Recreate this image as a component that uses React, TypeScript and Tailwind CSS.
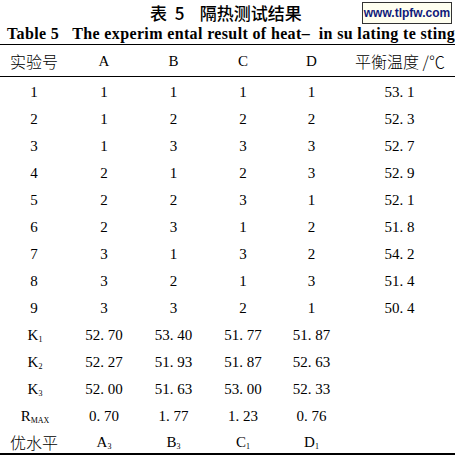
import React from 'react';

type Row = string[];

const serif = "font-['Liberation_Serif','Noto_Sans_CJK_SC',serif]";
const cjk = "font-['Noto_Sans_CJK_SC',sans-serif]";

const rows: Row[] = [
  ['1', '1', '1', '1', '1', '53. 1'],
  ['2', '1', '2', '2', '2', '52. 3'],
  ['3', '1', '3', '3', '3', '52. 7'],
  ['4', '2', '1', '2', '3', '52. 9'],
  ['5', '2', '2', '3', '1', '52. 1'],
  ['6', '2', '3', '1', '2', '51. 8'],
  ['7', '3', '1', '3', '2', '54. 2'],
  ['8', '3', '2', '1', '3', '51. 4'],
  ['9', '3', '3', '2', '1', '50. 4'],
];

const kRows: { sub: string; vals: string[] }[] = [
  { sub: '1', vals: ['52. 70', '53. 40', '51. 77', '51. 87'] },
  { sub: '2', vals: ['52. 27', '51. 93', '51. 87', '52. 63'] },
  { sub: '3', vals: ['52. 00', '51. 63', '53. 00', '52. 33'] },
];

const cols = 'grid grid-cols-[68px_72px_67px_72px_65px_111px] items-center';

const Sub: React.FC<{ base: string; sub: string }> = ({ base, sub }) => (
  <span>
    {base}
    <sub className="text-[8px] relative top-[2px]">{sub}</sub>
  </span>
);

const App: React.FC = () => {
  return (
    <div className={`w-[455px] h-[458px] bg-white text-black overflow-hidden ${serif}`}>
      {/* title */}
      <div className="relative h-[24px]">
        <div className={`pl-[150px] text-[17px] font-medium leading-[26px] whitespace-nowrap ${cjk}`}>
          表&nbsp;&nbsp;5&nbsp;&nbsp;&nbsp;&nbsp;隔热测试结果
        </div>
        <div className="absolute right-[3px] top-[2px] w-[90px] h-[22px] border border-[#333] bg-[#fffff0] flex items-center justify-center text-[12px] font-bold text-[#101a7a] font-['Liberation_Sans',sans-serif]">
          www.tlpfw.com
        </div>
      </div>
      <div className="h-[20px] pl-[7px] text-[16px] font-bold leading-[20px] whitespace-nowrap tracking-[0.36px]">
        Table 5&nbsp;&nbsp;&nbsp;The experim ental result of heat–&nbsp;&nbsp;in su lating te sting
      </div>

      <div className="border-t border-black" />
      {/* header */}
      <div className={`${cols} h-[32px] pt-[1px] text-[15px] border-b-[1.5px] border-black`}>
        <div className={`text-center text-[16px] font-light ${cjk}`}>实验号</div>
        <div className="text-center">A</div>
        <div className="text-center">B</div>
        <div className="text-center">C</div>
        <div className="text-center">D</div>
        <div className={`text-center text-[16px] font-light pl-[1px] ${cjk}`}>
          平衡温度 /℃
        </div>
      </div>

      {/* body */}
      <div className="pt-[2px] text-[15px]">
        {rows.map((r) => (
          <div key={r[0]} className={`${cols} h-[27px]`}>
            {r.map((v, i) => (
              <div key={i} className="text-center">
                {v}
              </div>
            ))}
          </div>
        ))}
        {kRows.map((k) => (
          <div key={k.sub} className={`${cols} h-[27px]`}>
            <div className="text-center pl-[2px]">
              <Sub base="K" sub={k.sub} />
            </div>
            {k.vals.map((v, i) => (
              <div key={i} className="text-center">
                {v}
              </div>
            ))}
            <div />
          </div>
        ))}
        <div className={`${cols} h-[27px]`}>
          <div className="text-center pl-[2px]">
            <Sub base="R" sub="MAX" />
          </div>
          <div className="text-center">0. 70</div>
          <div className="text-center">1. 77</div>
          <div className="text-center">1. 23</div>
          <div className="text-center">0. 76</div>
          <div />
        </div>
        <div className={`${cols} h-[25px] border-b-[2px] border-black`}>
          <div className={`text-center text-[16px] font-light ${cjk}`}>优水平</div>
          <div className="text-center"><Sub base="A" sub="3" /></div>
          <div className="text-center"><Sub base="B" sub="3" /></div>
          <div className="text-center"><Sub base="C" sub="1" /></div>
          <div className="text-center"><Sub base="D" sub="1" /></div>
          <div />
        </div>
      </div>
    </div>
  );
};

export default App;
